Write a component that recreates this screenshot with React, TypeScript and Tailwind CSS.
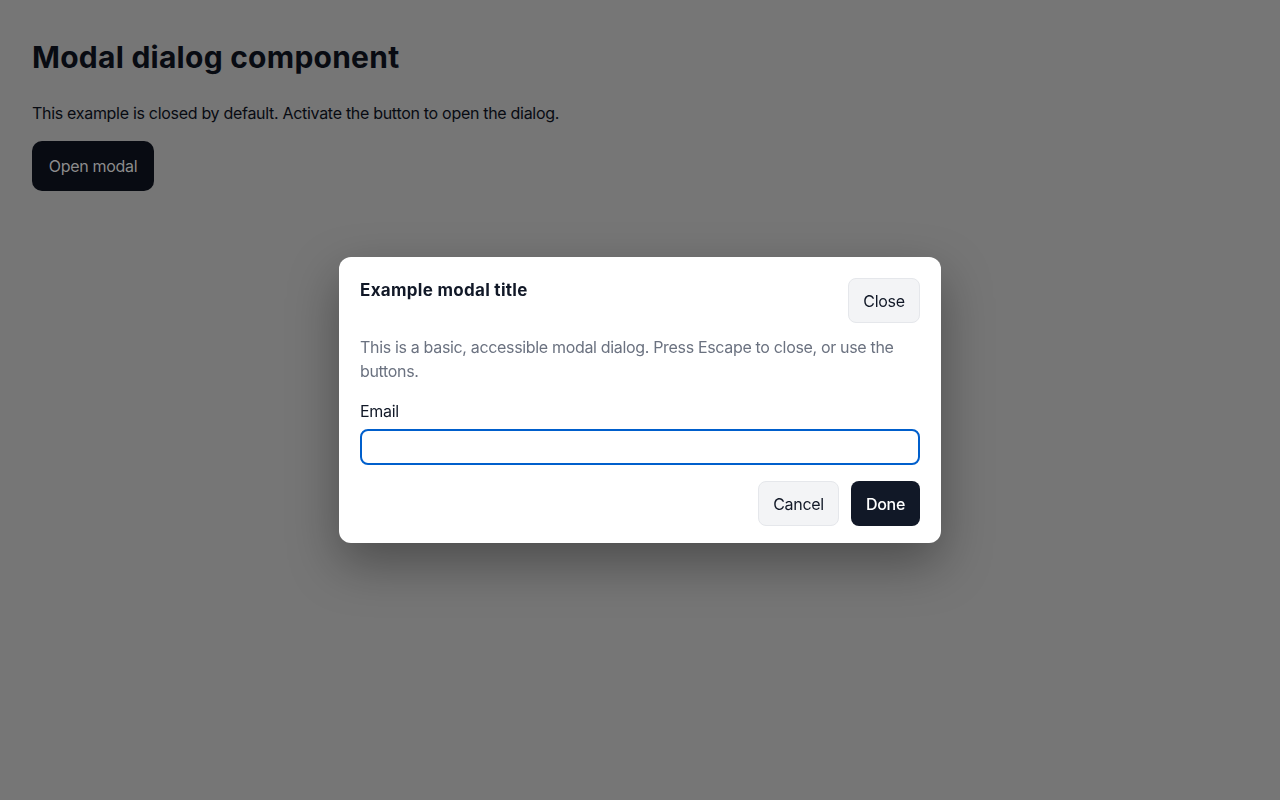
import React from "react";

export default function App() {
  return (
    <div
      className="relative min-h-[800px] w-full bg-[#767676] px-8 pt-[35px] tracking-[-0.3px]"
      style={{ fontFamily: "Inter, 'Noto Sans', sans-serif" }}
    >
      <h1 className="text-[30px] font-bold leading-[44px] tracking-[0.25px] text-[#080b12]">
        Modal dialog component
      </h1>
      <p className="mt-[22px] text-base leading-6 text-[#080b12]">
        This example is closed by default. Activate the button to open the dialog.
      </p>
      <button className="mt-4 h-[50px] w-[122px] rounded-[10px] bg-[#080b12] text-base text-[#8c8c8c]">
        Open modal
      </button>

      <div className="fixed inset-0 flex items-center justify-center">
        <div className="w-[602px] rounded-xl bg-white px-[21px] pb-[17px] pt-[21px] shadow-[0_20px_50px_rgba(0,0,0,0.35)]">
          <div className="flex items-start justify-between">
            <h2 className="text-[17px] font-bold leading-6 tracking-[0.3px] text-[#111827]">Example modal title</h2>
            <button className="h-[45px] w-[72px] rounded-lg border border-[#e5e7eb] bg-[#f3f4f6] text-base text-[#111827]">
              Close
            </button>
          </div>
          <p className="mt-3 text-base leading-6 tracking-[-0.33px] text-[#6b7280]">
            This is a basic, accessible modal dialog. Press Escape to close, or use the buttons.
          </p>
          <label className="mt-4 block text-base leading-6 text-[#111827]">Email</label>
          <input
            type="email"
            className="mt-[6px] block h-9 w-full rounded-lg border-2 border-[#005fcc] bg-white px-3 outline-none"
          />
          <div className="mt-4 flex justify-end gap-3">
            <button className="h-[45px] w-[81px] rounded-lg border border-[#e5e7eb] bg-[#f3f4f6] text-base text-[#111827]">
              Cancel
            </button>
            <button className="h-[45px] w-[69px] rounded-lg bg-[#111827] text-base font-medium text-white">
              Done
            </button>
          </div>
        </div>
      </div>
    </div>
  );
}
